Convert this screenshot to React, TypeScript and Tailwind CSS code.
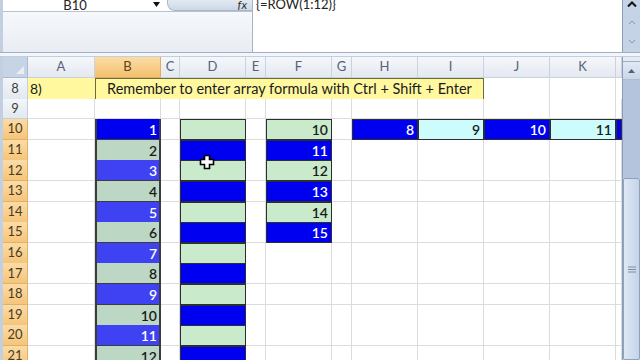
import React from "react";

type Cell = { bg?: string; text?: string; fg?: string; sel?: boolean };

const BLUE = "#0000f0";
const GREEN = "#c9ebcb";
const CYAN = "#ccfcfc";
const SEL_BLUE = "#3f42f2";
const SEL_GREEN = "#bcd7c3";

const cols = ["", "A", "B", "C", "D", "E", "F", "G", "H", "I", "J", "K", ""];

function rowCells(r: number): Cell[] {
  const cells: Cell[] = Array.from({ length: 12 }, () => ({}));
  if (r >= 10) {
    const odd = (r - 10) % 2 === 0;
    // column B holds 1..12, selected B10:B21
    cells[1] = {
      bg: r === 10 ? BLUE : odd ? SEL_BLUE : SEL_GREEN,
      text: String(r - 9),
      fg: odd ? "#ffffff" : "#1b1b1b",
      sel: true,
    };
    cells[3] = { bg: odd ? GREEN : BLUE };
    if (r <= 15) {
      cells[5] = { bg: odd ? GREEN : BLUE, text: String(r), fg: odd ? "#1b1b1b" : "#ffffff" };
    }
  }
  if (r === 10) {
    cells[7] = { bg: BLUE, text: "8", fg: "#ffffff" };
    cells[8] = { bg: CYAN, text: "9", fg: "#1b1b1b" };
    cells[9] = { bg: BLUE, text: "10", fg: "#ffffff" };
    cells[10] = { bg: CYAN, text: "11", fg: "#1b1b1b" };
    cells[11] = { bg: BLUE };
  }
  return cells;
}

const grid = "grid shrink-0 grid-cols-[25px_67px_66px_19px_66px_20px_66px_20px_66px_66px_66px_66px_6px]";

function DataCell({ c }: { c: Cell }) {
  if (!c.bg) {
    return <div className="border-r border-b border-[#dadcdd] bg-white" />;
  }
  const edge = c.sel
    ? "shadow-[inset_2px_0_0_#3c3c3c,inset_-2px_0_0_#3c3c3c,inset_0_-1px_0_#3c3c3c]"
    : "shadow-[inset_0_0_0_1px_#2e2e2e]";
  return (
    <div
      className={`flex items-center justify-end pr-[4px] text-[14px] font-semibold ${edge}`}
      style={{ background: c.bg, color: c.fg }}
    >
      {c.text}
    </div>
  );
}

function RowHeader({ r }: { r: number }) {
  const on = r >= 10;
  return (
    <div
      className={`flex items-center justify-center border-r border-b text-[13px] ${
        on
          ? "bg-gradient-to-b from-[#fbdca6] to-[#f5c57a] border-[#e2b169] text-[#4b3a1e]"
          : "bg-gradient-to-b from-[#f3f6fa] to-[#e3e9f1] border-[#c4cfdc] text-[#3d3d3d]"
      }`}
    >
      {r}
    </div>
  );
}

function Sheet() {
  const rows = [8, 9, 10, 11, 12, 13, 14, 15, 16, 17, 18, 19, 20, 21];
  return (
    <div className="flex flex-col">
      {/* column headers */}
      <div className={`${grid} h-[21px]`}>
        {cols.map((h, i) => (
          <div
            key={i}
            className={`flex items-center justify-center border-r border-b text-[13px] ${
              i === 0
                ? "bg-[#c7d4e6] border-[#a9b9cf] justify-end items-end pr-[3px] pb-[3px]"
                : i === 2
                ? "bg-gradient-to-b from-[#fbdda5] to-[#f3c06f] border-[#e0ad62] text-[#5a4418]"
                : "bg-gradient-to-b from-[#f5f7fa] to-[#e4e9f0] border-[#c9d3df] text-[#55627a]"
            }`}
          >
            {i === 0 ? (
              <svg width="8" height="8" viewBox="0 0 8 8">
                <path d="M8 0 L8 8 L0 8 Z" fill="#e9eef5" />
              </svg>
            ) : (
              h
            )}
          </div>
        ))}
      </div>
      {rows.map((r) => {
        if (r === 8) {
          return (
            <div key={r} className={`${grid} h-[20.6px]`}>
              <RowHeader r={r} />
              <div className="flex items-center bg-[#fff89e] pl-[2px] text-[14px] text-[#1b1b1b] border-b border-[#dadcdd]">
                8)
              </div>
              <div className="col-span-8 flex items-center justify-center bg-[#fff89e] text-[14.5px] text-[#1b1b1b] shadow-[inset_0_0_0_1px_#6b6b3a]">
                Remember to enter array formula with Ctrl + Shift + Enter
              </div>
              <div className="border-r border-b border-[#dadcdd]" />
              <div className="border-r border-b border-[#dadcdd]" />
              <div className="border-b border-[#dadcdd]" />
            </div>
          );
        }
        const cells = rowCells(r);
        return (
          <div key={r} className={`${grid} h-[20.6px]`}>
            <RowHeader r={r} />
            {cells.map((c, i) => (
              <DataCell key={i} c={c} />
            ))}
          </div>
        );
      })}
    </div>
  );
}

function Scrollbar() {
  return (
    <div className="flex w-[18px] flex-col bg-[#c9d6e8] border-l border-[#8d9db5]">
      <div className="h-[5px] shrink-0 border-b border-[#9aabc3] bg-[#e4ebf4]" />
      <div className="flex h-[18px] shrink-0 items-center justify-center border-b border-[#aebdd1] bg-gradient-to-b from-[#e1e9f4] to-[#c9d7e9]">
        <svg width="7" height="5" viewBox="0 0 7 5">
          <path d="M0 5 L3.5 1 L7 5 Z" fill="#4f6180" />
        </svg>
      </div>
      <div className="h-[98px] shrink-0 bg-[#b3c4dc]" />
      <div className="flex flex-1 items-center justify-center rounded-[2px] border border-[#8fa3bf] bg-gradient-to-r from-[#dfe8f4] to-[#c5d4e8]">
        <svg width="8" height="7" viewBox="0 0 8 7">
          <path d="M0 1 H8 M0 3.5 H8 M0 6 H8" stroke="#7d8da6" strokeWidth="1" />
        </svg>
      </div>
    </div>
  );
}

function Cursor() {
  return (
    <svg className="absolute left-[199px] top-[154px]" width="16" height="16" viewBox="0 0 16 16">
      <path
        d="M5.5 1.5 H10.5 V5.5 H14.5 V10.5 H10.5 V14.5 H5.5 V10.5 H1.5 V5.5 H5.5 Z"
        fill="#ffffff"
        stroke="#000000"
        strokeWidth="1.6"
      />
    </svg>
  );
}

export default function App() {
  return (
    <div
      className="relative flex h-[360px] w-[640px] flex-col overflow-hidden bg-white"
      style={{ fontFamily: "Lato, 'Open Sans', 'Liberation Sans', sans-serif" }}
    >
      {/* formula bar */}
      <div className="flex h-[53px] shrink-0 border-b border-[#9fb0c6]">
        <div className="w-[3px] bg-[#c2cfe0]" />
        <div className="flex w-[250px] flex-col border-r border-[#a5b4c8]">
          <div className="flex h-[12px] border-b border-[#b7c3d3]">
            <div className="relative flex w-[160px] items-end justify-center overflow-hidden bg-white pr-[16px]">
              <span className="-mb-[1px] text-[13px] leading-[13px] text-[#222]">B10</span>
              <svg className="absolute right-[3px] top-[2px]" width="7" height="5" viewBox="0 0 7 5">
                <path d="M0 0 H7 L3.5 5 Z" fill="#111" />
              </svg>
            </div>
            <div className="ml-[4px] flex flex-1 items-end justify-end overflow-hidden rounded-bl-[8px] border-b border-l border-[#a9b7ca] bg-gradient-to-b from-[#e3e9f2] to-[#cdd8e6] pr-[5px]">
              <span className="-mb-[1px] text-[12px] italic leading-[12px] text-[#333]">fx</span>
            </div>
          </div>
          <div className="flex-1 bg-gradient-to-b from-[#f6f8fb] to-[#e9edf3]" />
        </div>
        <div className="flex flex-1 items-start overflow-hidden pl-[3px]">
          <span className="-mt-[3px] text-[13px] leading-[14px] text-[#222]">{"{=ROW(1:12)}"}</span>
        </div>
        <div className="flex w-[18px] flex-col items-center border-l border-[#8d9db5] bg-[#c5d3e6]">
          <svg className="mt-[1px]" width="10" height="6" viewBox="0 0 10 6">
            <path d="M1 5.5 L5 1.5 L9 5.5" fill="none" stroke="#111" strokeWidth="2" />
          </svg>
          <svg className="mt-[12px]" width="8" height="6" viewBox="0 0 8 6">
            <path d="M1 5 L4 2 L7 5" fill="none" stroke="#8395b3" strokeWidth="1" />
          </svg>
          <svg className="mt-[14px]" width="8" height="6" viewBox="0 0 8 6">
            <path d="M1 1 L4 4 L7 1" fill="none" stroke="#8395b3" strokeWidth="1" />
          </svg>
        </div>
      </div>
      <div className="h-[4px] shrink-0 bg-[#f2f5f9] border-b border-[#c3cedd]" />

      {/* sheet area */}
      <div className="flex flex-1 overflow-hidden">
        <div className="w-[3px] bg-[#c2cfe0]" />
        <Sheet />
        <Scrollbar />
      </div>
      <Cursor />
    </div>
  );
}
